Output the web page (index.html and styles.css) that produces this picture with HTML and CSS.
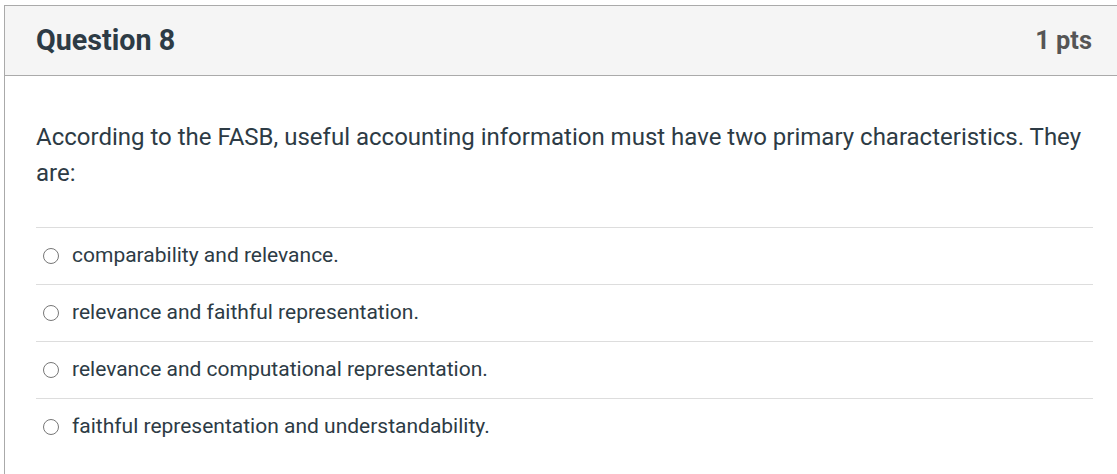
FILE: index.html
```html
<!DOCTYPE html>
<html>
<head>
<meta charset="utf-8">
<link rel="stylesheet" href="styles.css">
</head>
<body>
<div class="question">
  <div class="q-header">
    <h2 class="q-title">Question 8</h2>
    <div class="q-points">1 pts</div>
  </div>
  <div class="q-body">
    <p class="q-text">According to the FASB, useful accounting information must have two primary characteristics. They are:</p>
    <div class="answers">
      <label class="answer"><span class="radio"></span><span class="answer-text">comparability and relevance.</span></label>
      <label class="answer"><span class="radio"></span><span class="answer-text">relevance and faithful representation.</span></label>
      <label class="answer"><span class="radio"></span><span class="answer-text">relevance and computational representation.</span></label>
      <label class="answer"><span class="radio"></span><span class="answer-text">faithful representation and understandability.</span></label>
    </div>
  </div>
</div>
</body>
</html>
```
FILE: styles.css
```css
html, body {
  margin: 0;
  padding: 0;
  background: #fff;
  overflow: hidden;
}
body {
  padding: 5px 0 0 4px;
  font-family: Roboto, "Liberation Sans", sans-serif;
  color: #2d3b45;
}
.question {
  width: 1120px;
  border: 1px solid #aaaaaa;
  border-right: none;
}
.q-header {
  display: flex;
  justify-content: space-between;
  align-items: center;
  height: 67px;
  padding: 0 33px 2px 31px;
  background: #f5f5f5;
  border-bottom: 1px solid #aaaaaa;
}
.q-title {
  margin: 0;
  font-size: 28.7px;
  font-weight: 700;
  color: #2d3b45;
}
.q-points {
  font-size: 25.4px;
  font-weight: 700;
  color: #555555;
}
.q-body {
  padding: 43px 32px 40px 31px;
}
.q-text {
  margin: 0 0 36px 0;
  font-size: 24px;
  line-height: 36px;
}
.answers {
  display: flex;
  flex-direction: column;
}
.answer {
  display: flex;
  align-items: center;
  height: 54px;
  padding-bottom: 2px;
  border-top: 1px solid #dddddd;
  font-size: 21px;
}
.radio {
  width: 14px;
  height: 14px;
  border: 1.5px solid #777777;
  border-radius: 50%;
  margin: 2px 12px 0 7px;
  flex: none;
}
.answer-text {
  margin-left: 1px;
}
```
